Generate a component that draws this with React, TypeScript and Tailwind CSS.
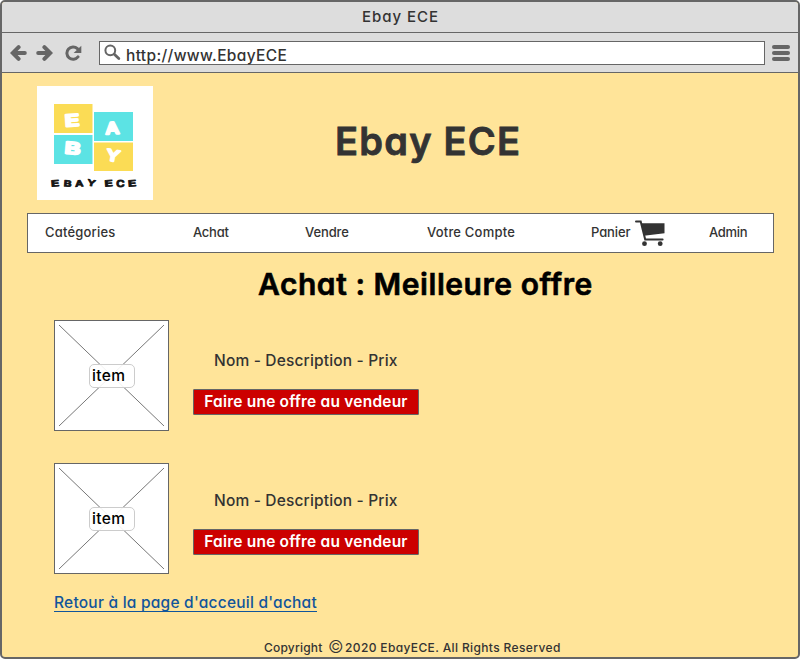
import React from "react";

function BackArrow({ flip = false }: { flip?: boolean }) {
  return (
    <svg width="17" height="16" viewBox="0 0 17 16" className={flip ? "-scale-x-100" : ""}>
      <path d="M8.600 2.200 2.800 8l5.800 5.800M4 8h10.800" fill="none" stroke="#666" strokeWidth="4" strokeLinecap="round" strokeLinejoin="miter" />
    </svg>
  );
}

function Reload() {
  return (
    <svg width="17" height="16" viewBox="0 0 17 16">
      <path d="M13 11.900A6.200 6.200 0 1 1 12.400 3.600" fill="none" stroke="#666" strokeWidth="3" strokeLinecap="round" />
      <path d="M16.300 .8V8H8.600Z" fill="#666" />
    </svg>
  );
}

function Search() {
  return (
    <svg width="17" height="17" viewBox="0 0 17 17">
      <circle cx="6.300" cy="6.300" r="4.900" fill="none" stroke="#666" strokeWidth="2" />
      <path d="M10.300 10.300 14.800 14.600" stroke="#666" strokeWidth="2.800" strokeLinecap="round" />
    </svg>
  );
}

function Cart() {
  return (
    <svg width="30" height="27" viewBox="0 0 30 27">
      <path d="M1 1.500H5.700L10.200 19.500H27.600" fill="none" stroke="#333" strokeWidth="2" strokeLinecap="round" />
      <path d="M6.500 3.300H29.500V13.200L9 15.800Z" fill="#333" />
      <circle cx="9.500" cy="23.700" r="2.400" fill="#333" />
      <circle cx="25.200" cy="23.700" r="2.400" fill="#333" />
    </svg>
  );
}

function Logo() {
  return (
    <svg width="116" height="114" viewBox="0 0 116 114" className="bg-white">
      <rect x="17" y="18" width="38.500" height="29" fill="#fbdc55" />
      <rect x="57" y="26" width="39" height="29" fill="#5ce3e4" />
      <rect x="17" y="49" width="38.500" height="29" fill="#5ce3e4" />
      <rect x="57" y="56.500" width="39" height="28.500" fill="#fbdc55" />
      <g fill="#fff" stroke="#fff" strokeWidth="2.200" strokeLinejoin="round" strokeLinecap="round" fontFamily="Inter, sans-serif" fontWeight="500" fontSize="16" textAnchor="middle">
        <text transform="translate(35.500 40) rotate(-4) scale(1.500 1)">E</text>
        <text transform="translate(75.500 48) rotate(-3) scale(1.200 1)">A</text>
        <text transform="translate(35 68) rotate(5) scale(1.500 1)">B</text>
        <text transform="translate(75 75) rotate(10) scale(1.200 .95)">Y</text>
      </g>
      <g fill="#151515" stroke="#151515" strokeWidth=".9" strokeLinejoin="round" fontFamily="Inter, sans-serif" fontWeight="600" fontSize="9.500" textAnchor="middle">
        <text transform="translate(18.500 100.500) rotate(-5) scale(1.450 .9)">E</text>
        <text transform="translate(30.500 100.500) rotate(5) scale(1.250 .9)">B</text>
        <text transform="translate(42.500 100.500) rotate(-3) scale(1.200 .9)">A</text>
        <text transform="translate(54 100) rotate(10) scale(1.250 .9)">Y</text>
        <text transform="translate(72 100.500) rotate(-5) scale(1.450 .9)">E</text>
        <text transform="translate(83.500 100.500) scale(1.200 .9)">C</text>
        <text transform="translate(95.500 100.500) rotate(-5) scale(1.450 .9)">E</text>
      </g>
    </svg>
  );
}

function Offer({ raised = false }: { raised?: boolean }) {
  return (
    <article className="flex h-[111px]">
      <div className="grid h-[111px] w-[115px] shrink-0 place-items-center border border-[#666] bg-white">
        <svg width="105" height="101" viewBox="0 0 105 101" className="col-start-1 row-start-1">
          <path d="M0 0 105 101M105 0 0 101" stroke="#777" strokeWidth="1" />
        </svg>
        <span className="col-start-1 row-start-1 mt-px ml-px h-6 w-[46px] rounded-[5px] border border-[#ccc] bg-white/90 pl-[2px] text-[15.5px] leading-[22px] font-medium tracking-[0.4px] text-black">item</span>
      </div>
      <div className={raised ? "ml-6 pt-[26px]" : "ml-6 pt-[29px]"}>
        <p className="ml-[21px] h-6 text-[15.5px] leading-6 font-[450] tracking-[0.17px] whitespace-nowrap">Nom - Description - Prix</p>
        <button className="mt-4 block h-[26px] w-[226px] rounded-[1px] border border-[#666] bg-[#cc0000] text-[15.5px] leading-6 font-semibold tracking-[0.21px] whitespace-nowrap text-white">Faire une offre au vendeur</button>
      </div>
    </article>
  );
}

export default function App() {
  return (
    <div className="bg-white">
      <div className="flex h-[659px] w-[800px] flex-col overflow-hidden rounded-[5px] border-2 border-[#666] bg-[#ffe499] font-[Inter,sans-serif] text-[#333] [font-feature-settings:'cv11','calt'_0]">
        <header className="h-[31px] shrink-0 border-b border-[#666] bg-[#ddd] pl-px text-center text-[15px] leading-[29px] font-medium tracking-[0.95px]">Ebay ECE</header>
        <div className="flex h-10 shrink-0 items-center border-b border-[#666] bg-[#ddd] pl-2">
          <BackArrow />
          <span className="ml-[9px]"><BackArrow flip /></span>
          <span className="ml-3"><Reload /></span>
          <div className="ml-[17px] flex h-6 w-[666px] items-center border border-[#666] bg-white pl-1">
            <Search />
            <span className="mt-[7px] ml-[5px] text-[15.5px] leading-5 font-medium tracking-[0.35px] whitespace-nowrap">http://www.EbayECE</span>
          </div>
          <div className="ml-[7px] flex flex-col gap-[2px]">
            <i className="h-1 w-[18px] rounded-full bg-[#666]" />
            <i className="h-1 w-[18px] rounded-full bg-[#666]" />
            <i className="h-1 w-[18px] rounded-full bg-[#666]" />
          </div>
        </div>
        <div className="flex h-[140px] shrink-0 pt-[13px] pl-[35px]">
          <Logo />
          <h1 className="mt-[31px] ml-[182px] text-[38px] leading-[48px] font-semibold tracking-[1.25px] whitespace-nowrap [-webkit-text-stroke:0.8px_#333] [stroke-linejoin:round]">Ebay ECE</h1>
        </div>
        <nav className="ml-[25px] grid h-10 w-[747px] shrink-0 grid-cols-[148px_112px_122px_164px_118px_1fr] border border-[#666] bg-white pl-[17px] text-[13px] leading-[37px] font-medium tracking-[0.2px] whitespace-nowrap">
          <span>Catégories</span>
          <span className="tracking-[-0.25px]">Achat</span>
          <span className="tracking-[-0.1px]">Vendre</span>
          <span>Votre Compte</span>
          <span className="flex"><span className="w-[44px] tracking-[-0.1px]">Panier</span><span className="mt-[6px]"><Cart /></span></span>
          <span className="tracking-[-0.3px]">Admin</span>
        </nav>
        <h2 className="mt-[11px] ml-[256px] h-10 shrink-0 text-[30px] leading-10 font-semibold tracking-[0.55px] whitespace-nowrap text-black [-webkit-text-stroke:0.6px_#000] [stroke-linejoin:round]">Achat : Meilleure offre</h2>
        <main className="mt-4 ml-[52px] flex shrink-0 flex-col gap-8">
          <Offer />
          <Offer raised />
        </main>
        <div className="mt-[18px] ml-[52px] flex shrink-0">
          <a className="h-[20px] border-b border-b-[#11559b] text-[15.5px] leading-[22px] font-[450] tracking-[0.23px] whitespace-nowrap text-[#11559b]">Retour à la page d'acceuil d'achat</a>
        </div>
        <footer className="mt-[25px] ml-[262px] flex text-[12px] leading-[21px] font-medium whitespace-nowrap">
          <span className="w-[64px] tracking-[0.2px]">Copyright</span>
          <span className="w-[17px] text-[17px] font-light">©</span>
          <span className="tracking-[0.37px]">2020 EbayECE. All Rights Reserved</span>
        </footer>
      </div>
    </div>
  );
}
